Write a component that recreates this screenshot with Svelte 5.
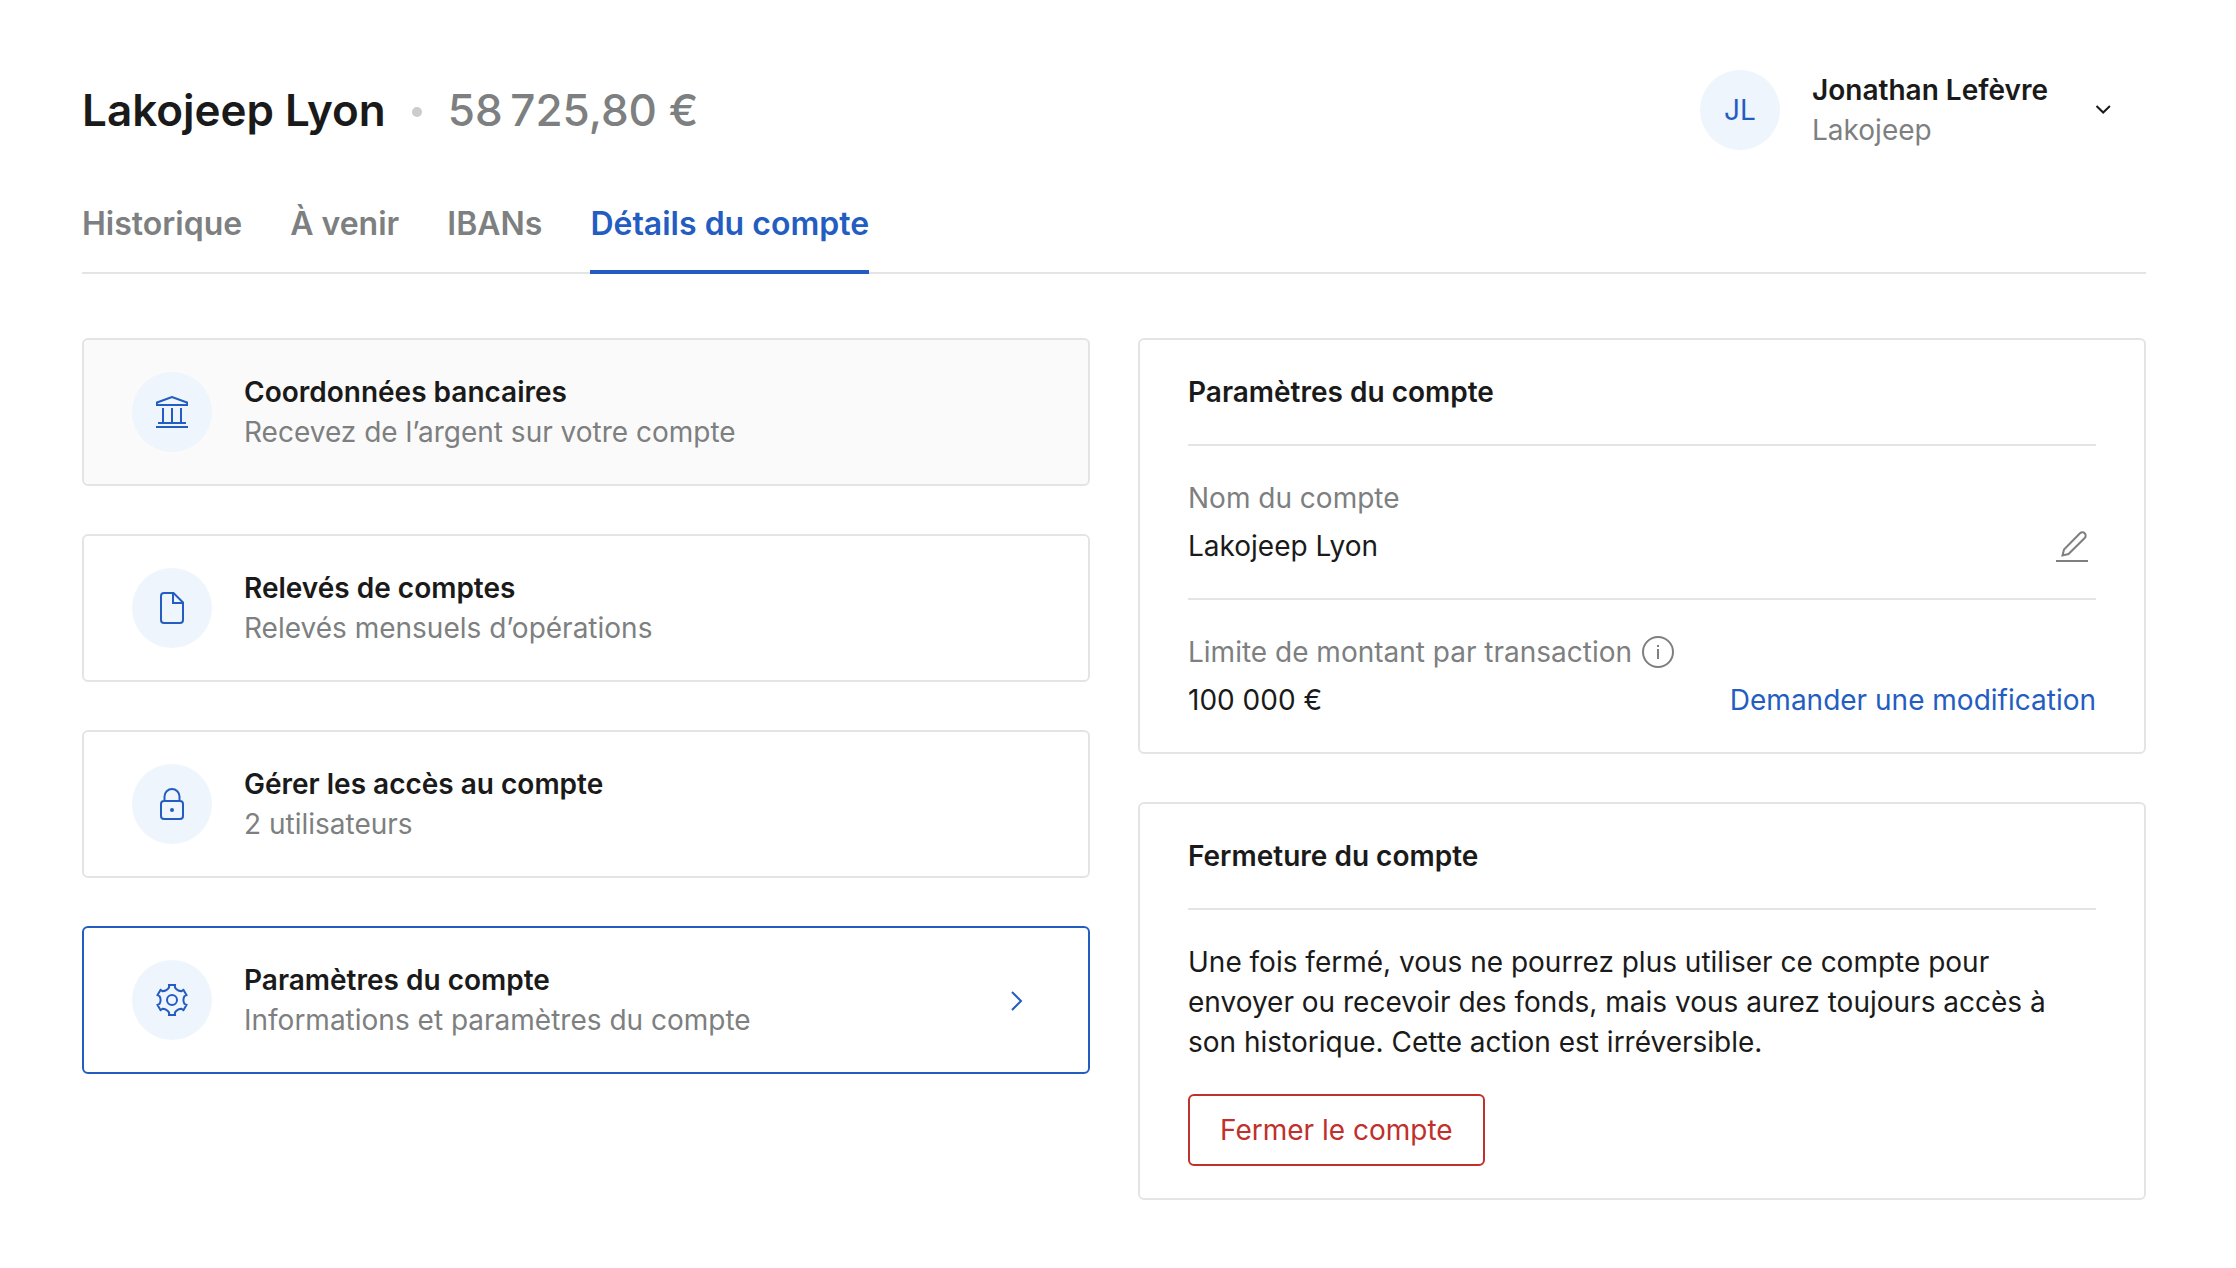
<script>
  const tabs = [
    { label: 'Historique' },
    { label: 'À venir' },
    { label: 'IBANs' },
    { label: 'Détails du compte', active: true }
  ];

  const entries = [
    { icon: 'bank', title: 'Coordonnées bancaires', text: 'Recevez de l’argent sur votre compte', state: 'hovered' },
    { icon: 'file', title: 'Relevés de comptes', text: 'Relevés mensuels d’opérations', state: '' },
    { icon: 'lock', title: 'Gérer les accès au compte', text: '2 utilisateurs', state: '' },
    { icon: 'gear', title: 'Paramètres du compte', text: 'Informations et paramètres du compte', state: 'selected' }
  ];

  // Six-tooth gear outline: one notch per 60°, given as distance along and across its axis.
  function gearPath() {
    let d = '';
    for (let k = 0; k < 6; k++) {
      const a = (k * Math.PI) / 3;
      const p = (u, v) =>
        `${(16 + u * Math.cos(a) - v * Math.sin(a)).toFixed(2)} ${(16 + u * Math.sin(a) + v * Math.cos(a)).toFixed(2)}`;
      d += `${k ? 'L' : 'M'}${p(14.5, -4.9)}L${p(12.4, -3.8)}Q${p(10.4, 0)} ${p(12.4, 3.8)}L${p(14.5, 4.9)}`;
    }
    return d + 'z';
  }
</script>

<div class="page">
  <header class="top">
    <h1 class="account">
      <span>Lakojeep Lyon</span>
      <span class="dot"></span>
      <span class="balance">58&#8239;725,80&nbsp;€</span>
    </h1>
    <button class="profile" type="button" aria-label="Menu utilisateur">
      <span class="badge">JL</span>
      <span class="lines">
        <span class="strong">Jonathan Lefèvre</span>
        <span class="muted">Lakojeep</span>
      </span>
      <svg class="chevron" width="32" height="32" viewBox="0 0 32 32">
        <path d="M8.500 12l6.700 6.500L21.900 12" />
      </svg>
    </button>
  </header>

  <nav class="tabs">
    {#each tabs as tab}
      <a href="#{tab.label}" class:active={tab.active} aria-current={tab.active ? 'page' : undefined}>{tab.label}</a>
    {/each}
  </nav>

  <main class="columns">
    <div class="column">
      {#each entries as entry}
        <a class="entry {entry.state}" href="#{entry.icon}">
          <span class="badge">
            <svg class="icon" width="32" height="32" viewBox="0 0 32 32">
              {#if entry.icon === 'bank'}
                <path d="M1 6.500L16 1l15 5.500V9H1zM7 12v14M16 12v14M25 12v14M2 27h28M0 31h32" />
              {:else if entry.icon === 'file'}
                <path d="M8 1h9.500L27 10.500V28a3 3 0 0 1-3 3H8a3 3 0 0 1-3-3V4a3 3 0 0 1 3-3zM17 1v10h10" />
              {:else if entry.icon === 'lock'}
                <path d="M8 13h16a3 3 0 0 1 3 3v12a3 3 0 0 1-3 3H8a3 3 0 0 1-3-3V16a3 3 0 0 1 3-3zM8.500 13V8.500a7.500 7.500 0 0 1 15 0V13" />
                <circle class="solid" cx="16" cy="22" r="2" />
              {:else}
                <path d={gearPath()} />
                <circle cx="16" cy="16" r="5" />
              {/if}
            </svg>
          </span>
          <span class="lines">
            <span class="strong">{entry.title}</span>
            <span class="muted">{entry.text}</span>
          </span>
          {#if entry.state === 'selected'}
            <svg class="icon" width="48" height="48" viewBox="0 0 48 48">
              <path d="M20 16l9 9-9 9" />
            </svg>
          {/if}
        </a>
      {/each}
    </div>

    <div class="column">
      <section class="panel">
        <h2>Paramètres du compte</h2>
        <div class="block">
          <div class="muted">Nom du compte</div>
          <div class="row">
            <span>Lakojeep Lyon</span>
            <button class="edit" type="button" aria-label="Modifier le nom du compte">
              <svg width="32" height="32" viewBox="0 0 32 32">
                <path d="M6.500 25.500l1.500-6L24 3.300a3.200 3.200 0 0 1 4.700 4.700L12.500 24zM0 31h32" />
              </svg>
            </button>
          </div>
        </div>
        <div class="block">
          <div class="muted label">
            <span>Limite de montant par transaction</span>
            <svg width="32" height="32" viewBox="0 0 32 32">
              <circle cx="16" cy="16" r="15" />
              <path d="M16 13v10M16 9v2" />
            </svg>
          </div>
          <div class="row">
            <span>100 000 €</span>
            <a class="link" href="#limite">Demander une modification</a>
          </div>
        </div>
      </section>

      <section class="panel">
        <h2>Fermeture du compte</h2>
        <div class="block closing">
          <p>Une fois fermé, vous ne pourrez plus utiliser ce compte pour envoyer ou recevoir des fonds, mais vous aurez toujours accès à son historique. Cette action est irréversible.</p>
          <button class="danger" type="button">Fermer le compte</button>
        </div>
      </section>
    </div>
  </main>
</div>

<style>
  :global(body) {
    margin: 0;
    background: #fff;
  }

  .page {
    box-sizing: border-box;
    padding: 70px 90px 68px 82px;
    font-family: Inter, 'Liberation Sans', sans-serif;
    font-size: 28px;
    line-height: 40px;
    color: #1a1a1a;
  }

  h1, h2, p {
    margin: 0;
  }

  button {
    padding: 0;
    border: 0;
    background: none;
    font: inherit;
    color: inherit;
    text-align: left;
    cursor: pointer;
  }

  a {
    color: inherit;
    text-decoration: none;
  }

  svg {
    flex: none;
    display: block;
    fill: none;
    stroke: currentColor;
    stroke-width: 2;
  }

  .solid {
    fill: currentColor;
    stroke: none;
  }

  .top {
    display: flex;
    align-items: center;
    justify-content: space-between;
  }

  .account {
    display: flex;
    align-items: center;
    font-size: 44px;
    line-height: 56px;
    font-weight: 600;
  }

  .dot {
    width: 10px;
    height: 10px;
    margin: 4px 26px 0;
    border-radius: 50%;
    background: #ccc;
  }

  .balance {
    font-weight: 500;
    color: #7d7f80;
  }

  .profile {
    display: flex;
    align-items: center;
    padding-right: 26px;
  }

  .chevron {
    margin-left: 40px;
    color: #1a1a1a;
  }

  .badge {
    flex: none;
    display: flex;
    align-items: center;
    justify-content: center;
    width: 80px;
    height: 80px;
    margin-right: 32px;
    border-radius: 50%;
    background: #eef5fc;
    color: #245dc1;
  }

  .lines {
    flex: 1;
    display: flex;
    flex-direction: column;
  }

  .strong {
    font-weight: 600;
  }

  .muted {
    color: #7d7f80;
  }

  .tabs {
    display: flex;
    gap: 48px;
    margin-top: 50px;
    box-shadow: inset 0 -2px #e3e4e4;
    font-size: 32px;
    line-height: 48px;
    font-weight: 600;
    color: #7d7f80;
  }

  .tabs a {
    padding-bottom: 22px;
    border-bottom: 4px solid transparent;
  }

  .tabs .active {
    border-color: #245dc1;
    color: #245dc1;
  }

  .columns {
    display: grid;
    grid-template-columns: 1fr 1fr;
    gap: 48px;
    margin-top: 64px;
  }

  .column {
    display: flex;
    flex-direction: column;
    gap: 48px;
  }

  .entry {
    display: flex;
    align-items: center;
    padding: 32px 48px;
    border: 2px solid #e3e4e4;
    border-radius: 6px;
  }

  .hovered {
    background: #fafafa;
  }

  .selected {
    border-color: #245dc1;
  }

  .icon {
    color: #245dc1;
  }

  .panel {
    padding: 32px 48px;
    border: 2px solid #e3e4e4;
    border-radius: 6px;
  }

  h2 {
    padding-bottom: 32px;
    font-size: 28px;
    font-weight: 600;
  }

  .block {
    display: flex;
    flex-direction: column;
    gap: 8px;
    padding: 32px 0;
    border-top: 2px solid #e3e4e4;
  }

  .block:last-child {
    padding-bottom: 0;
  }

  .row {
    display: flex;
    align-items: center;
    justify-content: space-between;
  }

  .edit {
    padding: 0 8px;
    color: #7d7f80;
  }

  .label {
    display: flex;
    align-items: center;
    gap: 10px;
  }

  .link {
    color: #245dc1;
  }

  .closing {
    gap: 32px;
  }

  .danger {
    align-self: flex-start;
    padding: 14px 30px;
    border: 2px solid #c0302c;
    border-radius: 6px;
    color: #c0302c;
  }
</style>
